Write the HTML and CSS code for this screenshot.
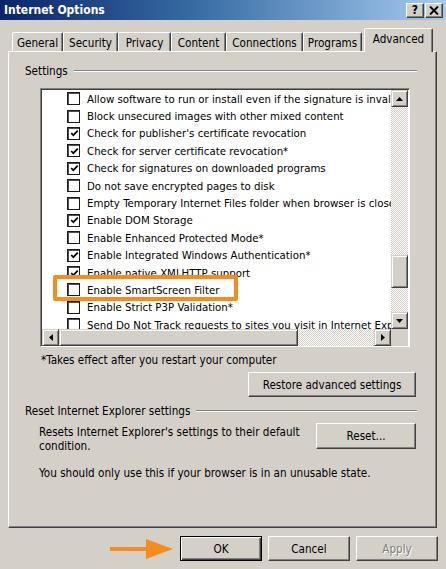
FILE: index.html
```html
<!DOCTYPE html>
<html>
<head>
<meta charset="utf-8">
<title>Internet Options</title>
<link rel="stylesheet" href="styles.css">
</head>
<body>
<div class="window">
  <div class="titlebar">
    <span class="title">Internet Options</span>
    <div class="tb-buttons">
      <span class="tbb help">?</span>
      <span class="tbb close"><svg width="10" height="9" viewBox="0 0 10 9"><path d="M1 0.5 L9 8.5 M9 0.5 L1 8.5" stroke="#000" stroke-width="2"/></svg></span>
    </div>
  </div>
  <div class="main">
    <div class="tabs">
      <div class="tab t-general">General</div>
      <div class="tab t-security">Security</div>
      <div class="tab t-privacy">Privacy</div>
      <div class="tab t-content">Content</div>
      <div class="tab t-connections">Connections</div>
      <div class="tab t-programs">Programs</div>
      <div class="tab active t-advanced">Advanced</div>
    </div>
    <div class="panel">
      <div class="group-label settings-label"><span>Settings</span><span class="etch"></span></div>
      <div class="listbox">
        <div class="list-main">
          <div class="rows">
            <div class="row"><span class="cb"></span><span class="lbl">Allow software to run or install even if the signature is invalid</span></div>
            <div class="row"><span class="cb"></span><span class="lbl">Block unsecured images with other mixed content</span></div>
            <div class="row"><span class="cb checked"><svg width="9" height="9" viewBox="0 0 9 9"><path d="M1.2 4 L3.3 6.2 L7.8 1.6" fill="none" stroke="#000" stroke-width="1.7"/></svg></span><span class="lbl">Check for publisher's certificate revocation</span></div>
            <div class="row"><span class="cb checked"><svg width="9" height="9" viewBox="0 0 9 9"><path d="M1.2 4 L3.3 6.2 L7.8 1.6" fill="none" stroke="#000" stroke-width="1.7"/></svg></span><span class="lbl">Check for server certificate revocation*</span></div>
            <div class="row"><span class="cb checked"><svg width="9" height="9" viewBox="0 0 9 9"><path d="M1.2 4 L3.3 6.2 L7.8 1.6" fill="none" stroke="#000" stroke-width="1.7"/></svg></span><span class="lbl">Check for signatures on downloaded programs</span></div>
            <div class="row"><span class="cb"></span><span class="lbl">Do not save encrypted pages to disk</span></div>
            <div class="row"><span class="cb"></span><span class="lbl">Empty Temporary Internet Files folder when browser is closed</span></div>
            <div class="row"><span class="cb checked"><svg width="9" height="9" viewBox="0 0 9 9"><path d="M1.2 4 L3.3 6.2 L7.8 1.6" fill="none" stroke="#000" stroke-width="1.7"/></svg></span><span class="lbl">Enable DOM Storage</span></div>
            <div class="row"><span class="cb"></span><span class="lbl">Enable Enhanced Protected Mode*</span></div>
            <div class="row"><span class="cb checked"><svg width="9" height="9" viewBox="0 0 9 9"><path d="M1.2 4 L3.3 6.2 L7.8 1.6" fill="none" stroke="#000" stroke-width="1.7"/></svg></span><span class="lbl">Enable Integrated Windows Authentication*</span></div>
            <div class="row"><span class="cb checked"><svg width="9" height="9" viewBox="0 0 9 9"><path d="M1.2 4 L3.3 6.2 L7.8 1.6" fill="none" stroke="#000" stroke-width="1.7"/></svg></span><span class="lbl">Enable native XMLHTTP support</span></div>
            <div class="row"><span class="cb"></span><span class="lbl">Enable SmartScreen Filter</span></div>
            <div class="row"><span class="cb"></span><span class="lbl">Enable Strict P3P Validation*</span></div>
            <div class="row"><span class="cb"></span><span class="lbl">Send Do Not Track requests to sites you visit in Internet Explorer*</span></div>
          </div>
          <div class="vscroll">
            <span class="sbtn"><svg width="7" height="4" viewBox="0 0 7 4"><path d="M0 4 L3.5 0 L7 4 Z" fill="#000"/></svg></span>
            <span class="track track-top"></span>
            <span class="thumb vthumb"></span>
            <span class="track track-bottom"></span>
            <span class="sbtn"><svg width="7" height="4" viewBox="0 0 7 4"><path d="M0 0 L3.5 4 L7 0 Z" fill="#000"/></svg></span>
          </div>
        </div>
        <div class="hrow">
          <div class="hscroll">
            <span class="sbtn"><svg width="4" height="7" viewBox="0 0 4 7"><path d="M4 0 L0 3.5 L4 7 Z" fill="#000"/></svg></span>
            <span class="thumb hthumb"></span>
            <span class="track htrack"></span>
            <span class="sbtn"><svg width="4" height="7" viewBox="0 0 4 7"><path d="M0 0 L4 3.5 L0 7 Z" fill="#000"/></svg></span>
          </div>
          <div class="corner"></div>
        </div>
        <div class="highlight"></div>
      </div>
      <div class="note">*Takes effect after you restart your computer</div>
      <div class="restore-row"><button class="btn restore">Restore advanced settings</button></div>
      <div class="group-label reset-label"><span>Reset Internet Explorer settings</span><span class="etch"></span></div>
      <div class="reset-row">
        <p class="reset-text">Resets Internet Explorer's settings to their default condition.</p>
        <button class="btn reset">Reset...</button>
      </div>
      <p class="warn">You should only use this if your browser is in an unusable state.</p>
    </div>
    <div class="footer">
      <svg class="arrow" width="64" height="22" viewBox="0 0 64 22"><path d="M0 11 L38 11" stroke="#f68b1f" stroke-width="4" stroke-linecap="round"/><path d="M36 1 L63 11 L36 21 Z" fill="#f68b1f"/></svg>
      <button class="btn ok">OK</button>
      <button class="btn cancel">Cancel</button>
      <button class="btn apply" disabled>Apply</button>
    </div>
  </div>
</div>
</body>
</html>
```

FILE: styles.css
```css
* { box-sizing: border-box; }
html, body { margin: 0; padding: 0; }
body {
  width: 446px;
  height: 569px;
  overflow: hidden;
  background: #d4d0c8;
  font-family: "DejaVu Sans Condensed", "DejaVu Sans", sans-serif;
  font-size: 11.6px;
  color: #000;
}
.window {
  width: 446px;
  height: 569px;
  display: flex;
  flex-direction: column;
}
.titlebar {
  height: 20px;
  flex: none;
  background: linear-gradient(to right, #0a246a 0%, #3a6ea5 45%, #a6caf0 100%);
  display: flex;
  align-items: center;
  justify-content: space-between;
  padding: 0 3px 0 4px;
}
.title {
  color: #fff;
  font-weight: bold;
  font-size: 12px;
}
.tb-buttons {
  display: flex;
  gap: 1px;
}
.tbb {
  width: 18px;
  height: 15px;
  background: #d4d0c8;
  border: 1px solid;
  border-color: #fff #404040 #404040 #fff;
  box-shadow: inset -1px -1px #808080;
  display: flex;
  align-items: center;
  justify-content: center;
  font-weight: bold;
  font-size: 12px;
  line-height: 1;
}
.main {
  padding: 0 9px 0 8px;
  flex: 1;
  display: flex;
  flex-direction: column;
}
.tabs {
  margin-top: 8px;
  height: 23px;
  display: flex;
  align-items: flex-end;
  padding-left: 4px;
  position: relative;
  z-index: 2;
}
.tab {
  height: 19px;
  border: 1px solid;
  border-bottom: none;
  border-color: #fff #404040 transparent #fff;
  box-shadow: inset -1px 0 #808080;
  border-radius: 2px 2px 0 0;
  display: flex;
  align-items: center;
  justify-content: center;
  padding-top: 2px;
  background: #d4d0c8;
  white-space: nowrap;
}
.t-general { width: 51px; }
.t-security { width: 55px; }
.t-privacy { width: 53px; }
.t-content { width: 55px; }
.t-connections { width: 77px; }
.t-programs { width: 59px; }
.tab.active {
  width: 69px;
  height: 24px;
  margin: 0 0 -1px 2px;
  padding-top: 0;
  padding-bottom: 4px;
}
.panel {
  height: 477px;
  border: 1px solid;
  border-color: #fff #404040 #404040 #fff;
  box-shadow: inset -1px -1px #808080;
  display: flex;
  flex-direction: column;
}
.group-label {
  display: flex;
  align-items: center;
  line-height: 14px;
  padding-left: 16px;
  margin-right: 19px;
}
.etch {
  flex: 1;
  height: 2px;
  border-top: 1px solid #808080;
  border-bottom: 1px solid #fff;
  margin-left: 6px;
}
.settings-label { margin-top: 12px; }
.listbox {
  position: relative;
  margin: 10px 0 0 31px;
  width: 370px;
  height: 259px;
  border: 1px solid;
  border-color: #808080 #fff #fff #808080;
  box-shadow: inset 1px 1px #404040;
  background: #fff;
  padding: 1px 1px 0 1px;
  display: flex;
  flex-direction: column;
}
.list-main {
  display: flex;
  height: 239px;
}
.rows {
  flex: 1;
  overflow: hidden;
}
.row {
  height: 17.4px;
  display: flex;
  align-items: center;
  padding-left: 25px;
  white-space: nowrap;
  font-size: 11.35px;
}
.cb {
  flex: none;
  width: 13px;
  height: 13px;
  border: 1px solid #1a1a1a;
  box-shadow: inset 1px 1px #505050;
  background: #fff;
  margin-right: 7px;
  display: flex;
  align-items: center;
  justify-content: center;
}
.cb svg { margin: 1px 0 0 1px; }
.vscroll {
  width: 17px;
  flex: none;
  display: flex;
  flex-direction: column;
}
.sbtn {
  width: 17px;
  height: 17px;
  flex: none;
  background: #d4d0c8;
  border: 1px solid;
  border-color: #d4d0c8 #404040 #404040 #d4d0c8;
  box-shadow: inset 1px 1px #fff, inset -1px -1px #808080;
  display: flex;
  align-items: center;
  justify-content: center;
}
.track {
  background-color: #fff;
  background-image: repeating-conic-gradient(#d4d0c8 0% 25%, #fff 0% 50%);
  background-size: 2px 2px;
}
.track-top { height: 148px; flex: none; }
.track-bottom { flex: 1; }
.thumb {
  background: #d4d0c8;
  border: 1px solid;
  border-color: #d4d0c8 #404040 #404040 #d4d0c8;
  box-shadow: inset 1px 1px #fff, inset -1px -1px #808080;
  flex: none;
}
.vthumb { height: 33px; }
.hrow {
  display: flex;
  height: 17px;
}
.hscroll {
  flex: 1;
  display: flex;
}
.hthumb { width: 239px; }
.htrack { flex: 1; }
.corner {
  width: 17px;
  background: #d4d0c8;
}
.highlight {
  position: absolute;
  left: 12px;
  top: 186px;
  width: 185px;
  height: 26px;
  border: 4px solid #f68b1f;
  border-radius: 2px;
}
.note {
  margin-top: 6px;
  padding-left: 32px;
  line-height: 14px;
}
.restore-row {
  margin-top: 5px;
  display: flex;
  justify-content: flex-end;
  padding-right: 20px;
}
.btn {
  font-family: inherit;
  font-size: 11.6px;
  color: #000;
  background: #d4d0c8;
  border: 1px solid;
  border-color: #fff #404040 #404040 #fff;
  box-shadow: inset -1px -1px #808080;
  padding: 0;
  height: 25px;
}
.restore { width: 168px; }
.reset-label { margin-top: 7px; }
.reset-row {
  margin-top: 5px;
  display: flex;
  justify-content: space-between;
  padding: 0 20px 0 30px;
}
.reset-text {
  margin: 2px 0 0;
  width: 275px;
  line-height: 14px;
}
.reset { width: 100px; height: 26px; }
.warn {
  margin: 13px 0 0;
  padding-left: 30px;
  line-height: 14px;
}
.footer {
  margin-top: 8px;
  display: flex;
  align-items: center;
  justify-content: flex-end;
  gap: 6px;
  margin-right: -1px;
}
.arrow { margin-right: 0; }
.btn.ok, .btn.cancel, .btn.apply { width: 82px; }
.btn.ok {
  border: 1px solid #000;
  box-shadow: inset 1px 1px #fff, inset -1px -1px #404040, inset -2px -2px #808080;
}
.btn.apply {
  color: #808080;
  text-shadow: 1px 1px #fff;
}
```
